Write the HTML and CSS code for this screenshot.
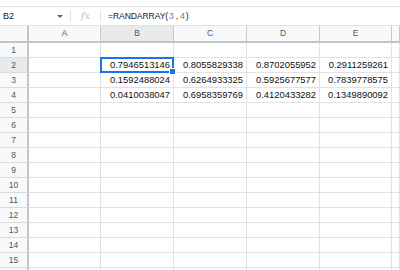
FILE: index.html
```html
<!DOCTYPE html>
<html lang="en">
<head>
    <meta charset="UTF-8">
    <title>Sheet - RANDARRAY</title>
    <link rel="stylesheet" href="styles.css">
</head>
<body>
    <div class="toolbar-edge"></div>
    <div class="formula-bar">
        <div class="name-box">
            <span>B2</span>
            <span class="caret"></span>
        </div>
        <div class="fx">fx</div>
        <div class="formula">=RANDARRAY(<span class="num">3</span><span class="sep">,</span><span class="num2">4</span>)</div>
    </div>
    <div class="sheet">
        <div class="row head">
            <div class="corner"></div>
            <div>A</div><div class="sel">B</div><div>C</div><div>D</div><div>E</div><div></div>
        </div>
        <div class="row"><div class="rh">1</div><div></div><div></div><div></div><div></div><div></div><div></div></div>
        <div class="row"><div class="rh sel">2</div><div></div><div class="active">0.7946513146<span class="handle"></span></div><div>0.8055829338</div><div>0.8702055952</div><div>0.2911259261</div><div></div></div>
        <div class="row"><div class="rh">3</div><div></div><div>0.1592488024</div><div>0.6264933325</div><div>0.5925677577</div><div>0.7839778575</div><div></div></div>
        <div class="row"><div class="rh">4</div><div></div><div>0.0410038047</div><div>0.6958359769</div><div>0.4120433282</div><div>0.1349890092</div><div></div></div>
        <div class="row"><div class="rh">5</div><div></div><div></div><div></div><div></div><div></div><div></div></div>
        <div class="row"><div class="rh">6</div><div></div><div></div><div></div><div></div><div></div><div></div></div>
        <div class="row"><div class="rh">7</div><div></div><div></div><div></div><div></div><div></div><div></div></div>
        <div class="row"><div class="rh">8</div><div></div><div></div><div></div><div></div><div></div><div></div></div>
        <div class="row"><div class="rh">9</div><div></div><div></div><div></div><div></div><div></div><div></div></div>
        <div class="row"><div class="rh">10</div><div></div><div></div><div></div><div></div><div></div><div></div></div>
        <div class="row"><div class="rh">11</div><div></div><div></div><div></div><div></div><div></div><div></div></div>
        <div class="row"><div class="rh">12</div><div></div><div></div><div></div><div></div><div></div><div></div></div>
        <div class="row"><div class="rh">13</div><div></div><div></div><div></div><div></div><div></div><div></div></div>
        <div class="row"><div class="rh">14</div><div></div><div></div><div></div><div></div><div></div><div></div></div>
        <div class="row"><div class="rh">15</div><div></div><div></div><div></div><div></div><div></div><div></div></div>
        <div class="row"><div class="rh"></div><div></div><div></div><div></div><div></div><div></div><div></div></div>
    </div>
</body>
</html>
```

FILE: styles.css
```css
body {
    margin: 0;
    padding: 0;
    font-family: Arial, "Liberation Sans", sans-serif;
    background-color: white;
    overflow: hidden;
}

.toolbar-edge {
    height: 6px;
    border-bottom: 1px solid #e0e0e0;
}

.formula-bar {
    display: flex;
    align-items: center;
    height: 18px;
    border-bottom: 1px solid #e0e0e0;
    font-size: 8.5px;
    color: #222;
}

.name-box {
    width: 71px;
    display: flex;
    align-items: center;
    justify-content: space-between;
    padding: 0 7px 0 3px;
    box-sizing: border-box;
    border-right: 1px solid #e0e0e0;
    height: 12px;
    font-size: 9px;
}

.caret {
    width: 0;
    height: 0;
    border-left: 3px solid transparent;
    border-right: 3px solid transparent;
    border-top: 3px solid #666;
}

.fx {
    width: 30px;
    height: 12px;
    line-height: 12px;
    box-sizing: border-box;
    border-right: 1px solid #e0e0e0;
    text-align: center;
    font-family: "DejaVu Serif", serif;
    font-style: italic;
    font-size: 10px;
    color: #c4c4c4;
}

.formula {
    padding-left: 7px;
    font-size: 8.6px;
    letter-spacing: -0.1px;
}

.formula .num {
    color: #6f7bd6;
    padding: 0 1px;
}

.formula .sep {
    padding: 0 1px;
}

.formula .num2 {
    color: #777;
    padding: 0 1px;
}

.row {
    display: grid;
    grid-template-columns: 29px 72px 73px 73px 73px 72px 1fr;
    height: 15px;
}

.row > div {
    box-sizing: border-box;
    border-right: 1px solid #e2e2e2;
    border-bottom: 1px solid #e2e2e2;
    font-size: 9.4px;
    line-height: 14px;
    text-align: right;
    padding-right: 3px;
    color: #111;
    white-space: nowrap;
}

.row.head {
    height: 17px;
}

.row.head > div {
    background-color: #f8f9fa;
    border-right: 1px solid #c9c9c9;
    border-bottom: 2px solid #c4c4c4;
    text-align: center;
    padding: 0;
    font-size: 8.5px;
    line-height: 15px;
    color: #555;
}

.row.head > div.corner {
    border-right: 2px solid #c4c4c4;
}

.row > div.rh {
    background-color: #f8f9fa;
    border-right: 2px solid #c4c4c4;
    border-bottom: 1px solid #dadada;
    text-align: center;
    padding: 0;
    font-size: 8.5px;
    color: #555;
}

.row > div.sel {
    background-color: #e8eaed;
}

.row > div.active {
    position: relative;
}

.active::after {
    content: "";
    position: absolute;
    left: -1px;
    top: -1px;
    right: -1px;
    bottom: -1px;
    border: 2px solid #1a73e8;
}

.handle {
    position: absolute;
    right: -3px;
    bottom: -3px;
    width: 5px;
    height: 5px;
    background-color: #1a73e8;
    border: 1px solid white;
    z-index: 2;
}
```
